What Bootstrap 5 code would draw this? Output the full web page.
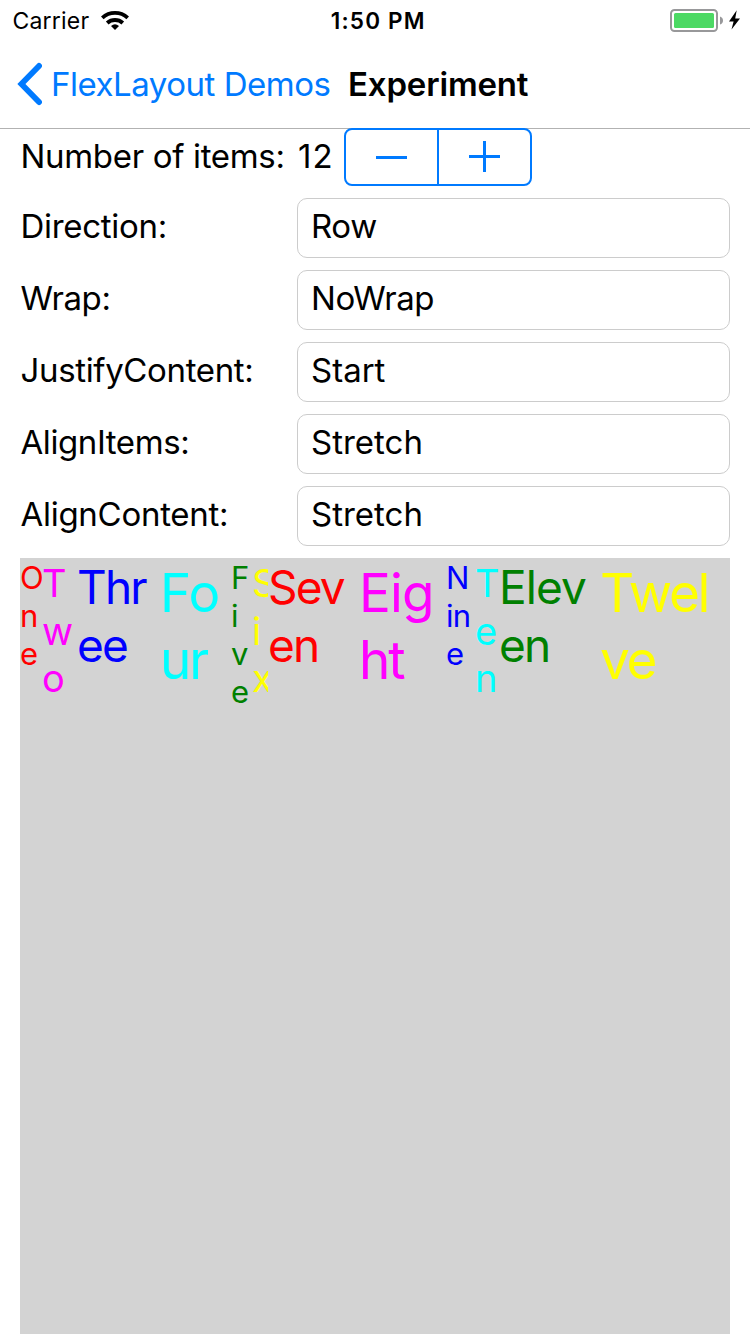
<!DOCTYPE html>
<html lang="en">
<head>
<meta charset="utf-8">
<meta name="viewport" content="width=device-width, initial-scale=1">
<title>Experiment</title>
<link href="https://cdn.jsdelivr.net/npm/bootstrap@5.3.0/dist/css/bootstrap.min.css" rel="stylesheet">
<style>
body{font:33px/40px Inter,"Liberation Sans",sans-serif;color:#000;background:#fff;font-feature-settings:"calt" 0}
.ios-blue{color:#007aff}
.screen{width:750px;height:1334px;overflow:hidden}
.screen svg{display:block;flex:none}
.status-bar{height:40px;font-size:23px;line-height:40px;padding:1px 6px 0 12.5px;display:grid;grid-template-columns:1fr auto 1fr}
.status-bar svg{margin-top:7px}
.carrier{letter-spacing:.2px;width:87.5px}
.clock{font-weight:600;font-size:22.5px;letter-spacing:1.2px}
.top-nav{height:89px;border-bottom:1px solid #b2b2b2;padding:0 0 0 16px;white-space:nowrap}
.back-text{letter-spacing:-.48px;width:297px;margin-left:9px}
.top-title{font-weight:600;letter-spacing:-.17px}
.form-area{padding:0 20px;margin-top:-1px}
.field-name{width:277px;line-height:56px;white-space:nowrap;letter-spacing:-.35px;padding-left:.5px}
.ls-count{letter-spacing:-.32px}.ls-dir{letter-spacing:-.3px}.ls-wrap,.ls-items{letter-spacing:-.42px}.ls-content{letter-spacing:-.28px}
.count-value{width:47px;line-height:56px;letter-spacing:1.2px;padding-left:1px}
.stepper{width:188px;height:58px;border:2px solid #007aff;border-radius:8px;background:#fff}
.stepper button{border:0;background:none;padding:0;flex:1 1 0}
.stepper-divider{width:2px;background:#007aff}
.field-row{height:60px;margin-top:12px}
.field-box{flex:1;height:60px;border:1px solid #ccc;border-radius:10px;padding:0 13px 4px;font-size:33px;line-height:40px;color:#000;letter-spacing:-.4px}
.field-box.wide{letter-spacing:0}
.flex-demo{margin:12px 20px 0;background:#d3d3d3}
.flex-demo>div{flex:none;overflow:hidden;white-space:nowrap;padding-top:1px}
.s1{font-size:31px;line-height:38px;letter-spacing:-.8px}
.s2{font-size:38px;line-height:47.5px}
.flex-demo>.s2{padding-top:2px}
.s3{font-size:46px;line-height:57.5px;letter-spacing:-1.8px}
.s4{font-size:53px;line-height:66.5px;letter-spacing:-.8px}
.flex-demo>.s4{padding-top:2px}
.tight{letter-spacing:-2.2px}
.kern{letter-spacing:-.9px}
.c-red{color:#f00}.c-magenta{color:#f0f}.c-blue{color:#00f}.c-cyan{color:#0ff}.c-green{color:#008000}.c-yellow{color:#ff0}
.w21{width:21px}.w22{width:22px}.w35{width:35px}.w83{width:83px}.w71{width:71px}.w16{width:16px}.w91{width:91px}.w87{width:87px}.w29{width:29px}.w24{width:24px}.w101{width:101px}.w130{width:130px}
</style>
</head>
<body>
<div class="screen d-flex flex-column">
  <div class="status-bar">
    <div class="d-flex">
      <span class="carrier">Carrier</span>
      <svg width="30" height="24" viewBox="100 8 30 24" fill="none" stroke="#000" stroke-width="3.8">
        <path d="M102.3 17.8A18.8 18.8 0 0 1 127.7 17.8"/>
        <path d="M107.2 23A11.7 11.7 0 0 1 122.8 23" stroke-width="3.9"/>
        <path d="M115 30L111 26Q115 22.6 119 26Z" fill="#000" stroke="none"/>
      </svg>
    </div>
    <div class="clock">1:50 PM</div>
    <div class="d-flex justify-content-end">
      <svg width="74" height="24" viewBox="670 8 74 24">
        <rect x="671" y="10" width="46" height="21" rx="3.5" fill="none" stroke="#98989a" stroke-width="2"/>
        <rect x="674" y="13" width="40" height="15" rx="1.5" fill="#4cd964"/>
        <path d="M720 16.5Q723 17.5 723 20.5T720 24.5Z" fill="#98989a"/>
        <path d="M736.7 10.3L729 21.4L733.6 21.4L731.5 29.6L740 18.4L735.2 18.4Z" fill="#000"/>
      </svg>
    </div>
  </div>
  <nav class="top-nav d-flex align-items-center">
    <svg width="26" height="44" viewBox="16 62 26 44" fill="none" stroke="#007aff" stroke-width="5.8" stroke-linecap="round"><path d="M39 65.9L21.4 84L39 102.1"/></svg>
    <span class="back-text ios-blue">FlexLayout Demos</span>
    <span class="top-title">Experiment</span>
  </nav>
  <div class="form-area">
    <div class="d-flex">
      <label class="field-name ls-count">Number of items:</label>
      <span class="count-value">12</span>
      <div class="stepper d-flex">
        <button type="button" class="d-flex align-items-center justify-content-center" aria-label="Decrease"><svg width="31" height="32"><path d="M0 15h31v3H0z" fill="#007aff"/></svg></button>
        <span class="stepper-divider"></span>
        <button type="button" class="d-flex align-items-center justify-content-center" aria-label="Increase"><svg width="31" height="32"><path d="M0 14h14V0h3v14h14v3H17v14h-3V17H0z" fill="#007aff"/></svg></button>
      </div>
    </div>
    <div class="field-row d-flex"><label class="field-name ls-dir">Direction:</label><input class="form-control field-box" value="Row"></div>
    <div class="field-row d-flex"><label class="field-name ls-wrap">Wrap:</label><input class="form-control field-box" value="NoWrap"></div>
    <div class="field-row d-flex"><label class="field-name">JustifyContent:</label><input class="form-control field-box wide" value="Start"></div>
    <div class="field-row d-flex"><label class="field-name ls-items">AlignItems:</label><input class="form-control field-box wide" value="Stretch"></div>
    <div class="field-row d-flex"><label class="field-name ls-content">AlignContent:</label><input class="form-control field-box wide" value="Stretch"></div>
  </div>
  <div class="flex-demo d-flex flex-nowrap align-items-stretch flex-grow-1">
    <div class="s1 c-red w22">O<br>n<br>e</div>
    <div class="s2 c-magenta w35">T<br>w<br>o</div>
    <div class="s3 c-blue w83">Thr<br>ee</div>
    <div class="s4 c-cyan w71">Fo<br><span class="tight">ur</span></div>
    <div class="s1 c-green w21">F<br>i<br>v<br>e</div>
    <div class="s2 c-yellow w16">S<br>i<br>x</div>
    <div class="s3 c-red w91">Sev<br>en</div>
    <div class="s4 c-magenta w87">Eig<br><span class="tight">ht</span></div>
    <div class="s1 c-blue w29">N<br>in<br>e</div>
    <div class="s2 c-cyan w24">T<br>e<br>n</div>
    <div class="s3 c-green w101"><span class="kern">Elev</span><br>en</div>
    <div class="s4 c-yellow w130 tight">Twel<br>ve</div>
  </div>
</div>
<script src="https://cdn.jsdelivr.net/npm/bootstrap@5.3.0/dist/js/bootstrap.bundle.min.js"></script>
</body>
</html>
